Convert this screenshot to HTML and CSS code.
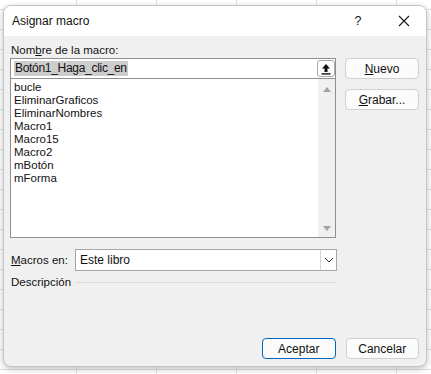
FILE: index.html
```html
<!DOCTYPE html>
<html lang="es">
<head>
  <meta charset="UTF-8">
  <title>Asignar macro</title>
  <link rel="stylesheet" href="styles.css">
</head>
<body>

<!-- Asignar macro dialog -->
<div class="dialog">
  <div class="titlebar">
    <span class="title">Asignar macro</span>
    <span class="help">?</span>
    <span class="close">
      <svg width="12" height="12" viewBox="0 0 12 12"><path d="M1 1 L11 11 M11 1 L1 11" stroke="#1a1a1a" stroke-width="1.1" fill="none"/></svg>
    </span>
  </div>

  <div class="body">
    <div class="top">
      <div class="left">
        <div class="label">Nom<u>b</u>re de la macro:</div>
        <div class="namebox">
          <span class="sel">Botón1_Haga_clic_en</span>
          <span class="upbtn">
            <svg width="10" height="12" viewBox="0 0 10 12"><path d="M5 1 L1 5.5 H3.5 V9 H6.5 V5.5 H9 Z" fill="#111"/><rect x="0.5" y="10.2" width="9" height="1.4" fill="#111"/></svg>
          </span>
        </div>
        <div class="list">
          <ul class="items">
            <li>bucle</li>
            <li>EliminarGraficos</li>
            <li>EliminarNombres</li>
            <li>Macro1</li>
            <li>Macro15</li>
            <li>Macro2</li>
            <li>mBotón</li>
            <li>mForma</li>
          </ul>
          <div class="scroll">
            <span class="arrow up"></span>
            <span class="arrow down"></span>
          </div>
        </div>
      </div>
      <div class="side">
        <button class="btn"><u>N</u>uevo</button>
        <button class="btn"><u>G</u>rabar...</button>
      </div>
    </div>

    <div class="row macros">
      <span class="rowlabel"><u>M</u>acros en:</span>
      <div class="select">
        <span class="value">Este libro</span>
        <span class="drop">
          <svg width="10" height="6" viewBox="0 0 10 6"><path d="M1 1 L5 5 L9 1" stroke="#333" stroke-width="1" fill="none"/></svg>
        </span>
      </div>
    </div>

    <div class="row desc">
      <span class="rowlabel">Descripción</span>
      <span class="rule"></span>
    </div>

    <div class="footer">
      <button class="btn primary">Aceptar</button>
      <button class="btn">Cancelar</button>
    </div>
  </div>
</div>

</body>
</html>
```

FILE: styles.css
```css
body {
  margin: 0;
  width: 431px;
  height: 374px;
  overflow: hidden;
  font-family: "Liberation Sans", Arial, sans-serif;
  font-size: 11.5px;
  color: #111;
  background-color: #ffffff;
  background-image:
    repeating-linear-gradient(to right, transparent 0, transparent 76px, #e2e2e2 76px, #e2e2e2 77px, transparent 77px, transparent 80px),
    repeating-linear-gradient(to bottom, transparent 0, transparent 9px, #e2e2e2 9px, #e2e2e2 10px, transparent 10px, transparent 20px);
  padding-top: 5px;
  box-sizing: border-box;
}

.dialog {
  margin-left: 3px;
  width: 424px;
  height: 362px;
  box-sizing: border-box;
  border: 1px solid #c4c4c4;
  border-radius: 8px;
  background: #f0f0f0;
  box-shadow: 0 2px 6px rgba(0,0,0,0.25);
  display: flex;
  flex-direction: column;
  overflow: hidden;
}

.titlebar {
  height: 30px;
  background: #ffffff;
  display: flex;
  align-items: center;
  padding-left: 8px;
}

.title {
  flex: 1;
  font-size: 12px;
  margin-top: -1px;
}

.help {
  width: 20px;
  text-align: center;
  font-size: 12.5px;
  margin-right: 26px;
}

.close {
  width: 20px;
  display: flex;
  justify-content: center;
  margin-right: 12px;
}

.body {
  flex: 1;
  display: flex;
  flex-direction: column;
  padding: 6px 7px 7px 6px;
}

.top {
  display: flex;
}

.left {
  width: 327px;
  margin-right: 9px;
}

.label {
  height: 16px;
  line-height: 16px;
  padding-left: 1px;
}

.namebox {
  height: 20px;
  box-sizing: border-box;
  border: 1px solid #8f8f8f;
  border-bottom: none;
  background: #fff;
  display: flex;
  align-items: center;
  justify-content: space-between;
  padding-left: 3px;
}

.sel {
  background: #cdcdcd;
  line-height: 15px;
  padding: 0 1px;
  font-size: 12px;
  letter-spacing: -0.3px;
}

.upbtn {
  width: 18px;
  height: 17px;
  box-sizing: border-box;
  border: 1px solid #a9a9a9;
  border-radius: 3px;
  background: #fdfdfd;
  display: flex;
  align-items: center;
  justify-content: center;
}

.list {
  height: 160px;
  box-sizing: border-box;
  border: 1px solid #8f8f8f;
  background: #fff;
  display: flex;
}

.items {
  flex: 1;
  list-style: none;
  margin: 0;
  padding: 2px 3px;
}

.items li {
  height: 13px;
  line-height: 13px;
}

.scroll {
  width: 17px;
  background: #f0f0f0;
  display: flex;
  flex-direction: column;
  justify-content: space-between;
  align-items: center;
  padding: 8px 0 6px;
}

.arrow {
  width: 0;
  height: 0;
  border-left: 4px solid transparent;
  border-right: 4px solid transparent;
}

.arrow.up {
  border-bottom: 5px solid #a3a3a3;
}

.arrow.down {
  border-top: 5px solid #a3a3a3;
}

.side {
  display: flex;
  flex-direction: column;
  gap: 10px;
  padding-top: 16px;
}

.btn {
  width: 74px;
  height: 21px;
  box-sizing: border-box;
  border: 1px solid #d0d0d0;
  border-radius: 4px;
  background: #fbfbfb;
  font-family: inherit;
  font-size: 12px;
  color: #111;
  padding: 0;
}

.btn.primary {
  border-color: #0067c0;
}

.row {
  display: flex;
  align-items: center;
}

.rowlabel {
  width: 64px;
  padding-left: 1px;
}

.macros {
  margin-top: 11px;
}

.select {
  width: 262px;
  height: 22px;
  box-sizing: border-box;
  border: 1px solid #a6a6a6;
  background: #fff;
  display: flex;
  align-items: center;
}

.value {
  flex: 1;
  padding-left: 4px;
  font-size: 12px;
}

.drop {
  width: 16px;
  height: 20px;
  box-sizing: border-box;
  border-left: 1px solid #d6d6d6;
  display: flex;
  align-items: center;
  justify-content: center;
}

.desc {
  margin-top: 1px;
  height: 20px;
}

.rule {
  width: 262px;
  height: 1px;
  background: #dadada;
}

.footer {
  margin-top: auto;
  display: flex;
  gap: 10px;
  padding-left: 252px;
}
```
